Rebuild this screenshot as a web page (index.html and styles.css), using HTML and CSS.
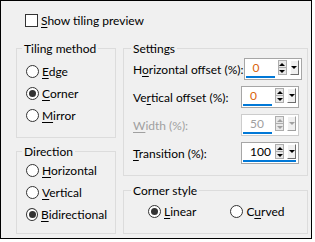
FILE: index.html
```html
<!DOCTYPE html>
<html lang="en">
<head>
  <meta charset="UTF-8" />
  <title>Tiling</title>
  <link rel="stylesheet" href="styles.css">
</head>
<body>

<div class="dialog">
  <label class="check-row">
    <span class="checkbox"></span>
    <span><u>S</u>how tiling preview</span>
  </label>

  <div class="columns">
    <div class="col-left">
      <fieldset class="group tiling">
        <legend>Tiling method</legend>
        <div class="radio-row"><span class="radio"></span><span><u>E</u>dge</span></div>
        <div class="radio-row"><span class="radio on"></span><span><u>C</u>orner</span></div>
        <div class="radio-row"><span class="radio"></span><span><u>M</u>irror</span></div>
      </fieldset>

      <fieldset class="group direction">
        <legend>Direction</legend>
        <div class="radio-row"><span class="radio"></span><span><u>H</u>orizontal</span></div>
        <div class="radio-row"><span class="radio"></span><span><u>V</u>ertical</span></div>
        <div class="radio-row"><span class="radio on"></span><span><u>B</u>idirectional</span></div>
      </fieldset>
    </div>

    <div class="col-right">
      <fieldset class="group settings">
        <legend>Settings</legend>
        <div class="field-row">
          <span class="field-label">H<u>o</u>rizontal offset (%):</span>
          <div class="spin">
            <div class="spin-row"><span class="spin-val orange">0</span><span class="spin-arrows"><b><i class="up"></i></b><b><i class="down"></i></b></span><span class="spin-drop"><i class="down"></i></span></div>
            <div class="spin-bar"></div>
          </div>
        </div>
        <div class="field-row">
          <span class="field-label">Ve<u>r</u>tical offset (%):</span>
          <div class="spin">
            <div class="spin-row"><span class="spin-val orange">0</span><span class="spin-arrows"><b><i class="up"></i></b><b><i class="down"></i></b></span><span class="spin-drop"><i class="down"></i></span></div>
            <div class="spin-bar"></div>
          </div>
        </div>
        <div class="field-row disabled">
          <span class="field-label"><u>W</u>idth (%):</span>
          <div class="spin">
            <div class="spin-row"><span class="spin-val">50</span><span class="spin-arrows"><b><i class="up"></i></b><b><i class="down"></i></b></span><span class="spin-drop"><i class="down"></i></span></div>
            <div class="spin-bar"></div>
          </div>
        </div>
        <div class="field-row">
          <span class="field-label"><u>T</u>ransition (%):</span>
          <div class="spin">
            <div class="spin-row"><span class="spin-val">100</span><span class="spin-arrows"><b><i class="up"></i></b><b><i class="down"></i></b></span><span class="spin-drop"><i class="down"></i></span></div>
            <div class="spin-bar wide"></div>
          </div>
        </div>
      </fieldset>

      <fieldset class="group corner">
        <legend>Corner style</legend>
        <div class="corner-row">
          <div class="radio-row"><span class="radio on"></span><span><u>L</u>inear</span></div>
          <div class="radio-row"><span class="radio"></span><span>C<u>u</u>rved</span></div>
        </div>
      </fieldset>
    </div>
  </div>
</div>

</body>
</html>
```

FILE: styles.css
```css
* { box-sizing: border-box; margin: 0; padding: 0; }
body { background: #fff; font-family: Lato, 'Noto Sans', sans-serif; font-size: 12px; color: #000; }
u { text-decoration: underline; text-underline-offset: 2px; }

.dialog { width: 312px; height: 239px; border: 1px solid #000; background: #f0f0f0; padding: 12px 3px 0 15px; }

.check-row { display: flex; align-items: center; height: 15px; margin-left: 9px; gap: 3px; }
.checkbox { width: 13px; height: 13px; border: 1px solid #333; background: #fff; }

.columns { display: flex; gap: 7px; margin-top: 13px; }
.col-left { width: 100px; display: flex; flex-direction: column; gap: 6px; }
.col-right { width: 185px; display: flex; flex-direction: column; gap: 7px; }

.group { border: 1px solid #dcdcdc; padding: 0 8px 0 9px; min-width: 0; }
.group legend { line-height: 15px; padding: 0 2px; margin-left: -4px; }
.settings legend, .corner legend { margin-left: -2px; }

.tiling { padding-top: 4px; padding-bottom: 11px; }
.direction { padding-bottom: 8px; }
.settings { padding-top: 2px; padding-bottom: 11px; display: flex; flex-direction: column; gap: 6px; }
.corner { height: 51px; }

.radio-row { display: flex; align-items: center; gap: 3px; height: 22px; }
.radio { width: 13px; height: 13px; border: 1px solid #333; border-radius: 50%; background: #fff; display: flex; align-items: center; justify-content: center; }
.radio.on::after { content: ""; width: 7px; height: 7px; border-radius: 50%; background: #333; }

.corner-row { display: flex; gap: 34px; margin-top: 2px; padding-left: 15px; }

.field-row { display: flex; justify-content: space-between; align-items: center; height: 22px; }
.field-label { white-space: nowrap; }
.spin { flex-shrink: 0; width: 58px; height: 22px; border: 1px solid #a6a6a6; background: #fff; padding: 1px 2px 1px 1px; display: flex; flex-direction: column; gap: 1px; }
.spin-row { display: flex; align-items: center; height: 15px; }
.spin-val { flex: 1; padding-left: 7px; line-height: 15px; }
.spin-val.orange { color: #d9640b; }
.spin-bar { height: 2px; width: 29px; background: #0078d7; }
.spin-bar.wide { width: auto; }

.spin-arrows { width: 9px; height: 15px; border: 1px solid #adadad; background: #e8e8e8; display: flex; flex-direction: column; }
.spin-arrows b { flex: 1; display: flex; align-items: center; justify-content: center; }
.spin-arrows b + b { border-top: 1px solid #adadad; }
.spin-drop { width: 9px; height: 15px; margin-left: 3px; background: #f0f0f0; border-top: 1px solid #fff; border-left: 1px solid #fff; border-right: 1px solid #6d6d6d; border-bottom: 1px solid #6d6d6d; display: flex; align-items: center; justify-content: center; }
i { display: block; width: 0; height: 0; border-left: 3px solid transparent; border-right: 3px solid transparent; }
i.up { border-bottom: 3px solid #000; }
i.down { border-top: 3px solid #000; }

.disabled { color: #a0a0a0; }
.disabled .spin { border-color: #cccccc; }
.disabled i.up { border-bottom-color: #a0a0a0; }
.disabled i.down { border-top-color: #a0a0a0; }
.disabled .spin-drop { border-right-color: #a0a0a0; border-bottom-color: #a0a0a0; }
```
